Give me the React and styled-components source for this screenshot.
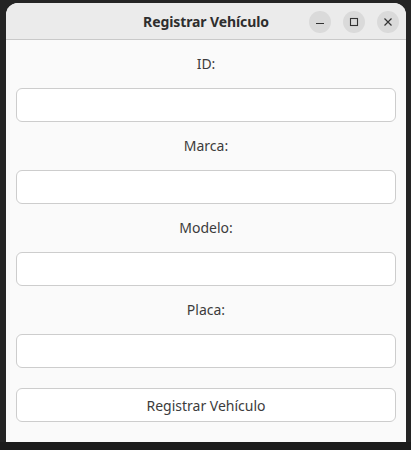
import React from "react";
import styled, { createGlobalStyle } from "styled-components";

const GlobalStyle = createGlobalStyle`
  html, body {
    margin: 0;
    padding: 0;
    background: #242424;
    font-family: "Noto Sans", "Open Sans", sans-serif;
  }
`;

const Desktop = styled.div`
  height: 450px;
  padding: 3px 5px 0 6px;
  box-sizing: border-box;
  background: linear-gradient(#242424 0, #242424 442px, #1c1c1c 442px);
`;

const Window = styled.div`
  width: 400px;
  height: 439px;
  background: #fafafa;
  border-radius: 12px 12px 0 0;
  overflow: hidden;
  display: flex;
  flex-direction: column;
`;

const TitleBar = styled.div`
  height: 36px;
  flex: none;
  display: grid;
  grid-template-columns: 1fr auto 1fr;
  align-items: center;
  background: #ebebeb;
  border-bottom: 1px solid #c9c9c9;
`;

const Title = styled.div`
  grid-column: 2;
  font-size: 14px;
  font-weight: 700;
  color: #2e2e2e;
  letter-spacing: -0.1px;
`;

const Controls = styled.div`
  grid-column: 3;
  justify-self: end;
  display: flex;
  gap: 12px;
  padding-right: 7px;
  margin-top: 2px;
`;

const CircleButton = styled.button`
  width: 22px;
  height: 22px;
  border: none;
  border-radius: 50%;
  background: #dadada;
  padding: 0;
  display: flex;
  align-items: center;
  justify-content: center;
  color: #333;
`;

const Form = styled.div`
  display: flex;
  flex-direction: column;
  padding: 14px 10px 20px;
  gap: 14px;
`;

const Label = styled.div`
  height: 20px;
  line-height: 20px;
  text-align: center;
  font-size: 14px;
  color: #3c3c3c;
`;

const Input = styled.input`
  height: 34px;
  box-sizing: border-box;
  border: 1px solid #cdcdcd;
  border-radius: 6px;
  background: #fff;
  font: inherit;
  padding: 0 8px;
  outline: none;
`;

const SubmitButton = styled.button`
  margin-top: 6px;
  height: 34px;
  border: 1px solid #cdcdcd;
  border-radius: 6px;
  background: #fff;
  font-family: inherit;
  font-size: 14px;
  color: #3c3c3c;
`;

const fields = ["ID:", "Marca:", "Modelo:", "Placa:"];

export default function App() {
  return (
    <>
      <GlobalStyle />
      <Desktop>
        <Window>
          <TitleBar>
            <Title>Registrar Vehículo</Title>
            <Controls>
              <CircleButton aria-label="minimize">
                <svg width="10" height="10" viewBox="0 0 10 10">
                  <path d="M1 6.5h8" stroke="currentColor" strokeWidth="1.2" />
                </svg>
              </CircleButton>
              <CircleButton aria-label="maximize">
                <svg width="10" height="10" viewBox="0 0 10 10">
                  <rect x="1.5" y="1.5" width="7" height="7" fill="none" stroke="currentColor" strokeWidth="1.1" />
                </svg>
              </CircleButton>
              <CircleButton aria-label="close">
                <svg width="10" height="10" viewBox="0 0 10 10">
                  <path d="M1.5 1.5l7 7M8.5 1.5l-7 7" stroke="currentColor" strokeWidth="1.2" />
                </svg>
              </CircleButton>
            </Controls>
          </TitleBar>
          <Form>
            {fields.map((f) => (
              <React.Fragment key={f}>
                <Label>{f}</Label>
                <Input />
              </React.Fragment>
            ))}
            <SubmitButton>Registrar Vehículo</SubmitButton>
          </Form>
        </Window>
      </Desktop>
    </>
  );
}
